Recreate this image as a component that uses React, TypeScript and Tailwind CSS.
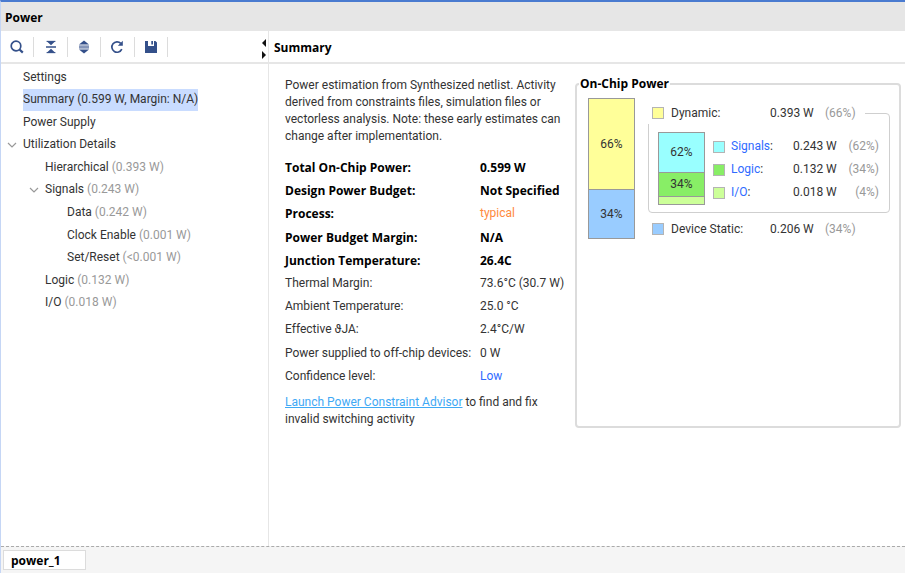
import type { ReactNode } from "react";

type TreeItem = {
  label: string;
  value?: string;
  indent: string;
  expanded?: boolean;
  selected?: boolean;
};

const tree: TreeItem[] = [
  { label: "Settings", indent: "pl-1" },
  { label: "Summary (0.599 W, Margin: N/A)", indent: "pl-1", selected: true },
  { label: "Power Supply", indent: "pl-1" },
  { label: "Utilization Details", indent: "pl-1", expanded: true },
  { label: "Hierarchical", value: "(0.393 W)", indent: "pl-[26px]" },
  { label: "Signals", value: "(0.243 W)", indent: "pl-[26px]", expanded: true },
  { label: "Data", value: "(0.242 W)", indent: "pl-12" },
  { label: "Clock Enable", value: "(0.001 W)", indent: "pl-12" },
  { label: "Set/Reset", value: "(<0.001 W)", indent: "pl-12" },
  { label: "Logic", value: "(0.132 W)", indent: "pl-[26px]" },
  { label: "I/O", value: "(0.018 W)", indent: "pl-[26px]" },
];

const summary = [
  { label: "Total On-Chip Power:", value: "0.599 W", bold: true },
  { label: "Design Power Budget:", value: "Not Specified", bold: true },
  { label: "Process:", value: "typical", bold: true, tone: "font-['Roboto','Open_Sans',sans-serif] font-normal text-[#ff8a3c]" },
  { label: "Power Budget Margin:", value: "N/A", bold: true },
  { label: "Junction Temperature:", value: "26.4C", bold: true },
  { label: "Thermal Margin:", value: "73.6°C (30.7 W)" },
  { label: "Ambient Temperature:", value: "25.0 °C" },
  { label: "Effective ϑJA:", value: "2.4°C/W" },
  { label: "Power supplied to off-chip devices:", value: "0 W" },
  { label: "Confidence level:", value: "Low", tone: "text-[#2f6bff]" },
];

const dynamicParts = [
  { label: "Signals", value: "0.243 W", pct: "(62%)", color: "bg-[#99ffff]" },
  { label: "Logic", value: "0.132 W", pct: "(34%)", color: "bg-[#88ee66]" },
  { label: "I/O", value: "0.018 W", pct: "(4%)", color: "bg-[#ccff99]" },
];

function ToolButton({ label, children }: { label: string; children: ReactNode }) {
  return (
    <button
      type="button"
      aria-label={label}
      className="flex h-5 flex-1 items-center justify-center border-r border-[#dcdcdc] text-[#34508a]"
    >
      <svg width="16" height="16" viewBox="0 0 16 16" fill="none" stroke="currentColor">
        {children}
      </svg>
    </button>
  );
}

function Swatch({ color }: { color: string }) {
  return <span className={`h-3 w-3 shrink-0 border border-[#b4b4b4] ${color}`} />;
}

function Toolbar() {
  return (
    <div className="flex h-[31px] items-center">
      <div className="flex w-[167px]">
        <ToolButton label="Search">
          <circle cx="7" cy="7" r="4.8" strokeWidth="1.7" />
          <path d="M10.5 10.5L13.8 13.6" strokeWidth="2.2" />
        </ToolButton>
        <ToolButton label="Collapse all">
          <path d="M3 8H13" strokeWidth="1.5" />
          <path d="M3.6 2.4H12.4" strokeWidth="1.1" />
          <path d="M3.6 13.6H12.4" strokeWidth="1.1" />
          <path d="M4 2.6H12L8 6.2ZM4 13.4H12L8 9.8Z" fill="currentColor" stroke="none" />
        </ToolButton>
        <ToolButton label="Expand all">
          <path d="M3 5.6L8 1.6L13 5.6ZM3 10.4L8 14.4L13 10.4Z" fill="currentColor" stroke="none" />
          <path d="M3 7.1H13M3 8.9H13" strokeWidth="1" />
        </ToolButton>
        <ToolButton label="Refresh">
          <path d="M11.8 4.4A5.2 5.2 0 1 0 12.8 10.2" strokeWidth="1.7" />
          <path d="M13.8 1.8V6.8H8.8Z" fill="currentColor" stroke="none" />
        </ToolButton>
        <ToolButton label="Save">
          <path d="M2 2H5V7H11V2H12.4L14 3.6V14H2ZM8.3 2H10V5.6H8.3Z" fill="currentColor" stroke="none" />
        </ToolButton>
      </div>
      <svg className="mt-1 mr-px ml-auto" width="6" height="20" viewBox="0 0 6 20" fill="#111">
        <path d="M5 0V8L1 4Z" />
        <path d="M1 12V20L5 16Z" />
      </svg>
    </div>
  );
}

function Tree() {
  return (
    <ul className="grid h-[250px] auto-rows-fr pt-[2px] pl-[6px]">
      {tree.map((item) => (
        <li key={item.label} className={`flex items-stretch ${item.indent}`}>
          <span className="flex w-3 shrink-0 items-center">
            {item.expanded && (
              <svg className="-ml-1" width="10" height="10" viewBox="0 0 10 10" fill="none" stroke="#999" strokeWidth="1.2">
                <path d="M1 3L5 7L9 3" />
              </svg>
            )}
          </span>
          <span
            className={`flex items-center whitespace-pre ${item.selected ? "bg-[#c9dcff]" : ""}`}
          >
            {item.label}
            {item.value && <span className="text-[#999]"> {item.value}</span>}
          </span>
        </li>
      ))}
    </ul>
  );
}

function OnChipPower() {
  return (
    <fieldset className="mt-3 mr-1 min-h-[352px] min-w-0 flex-1 rounded-sm border-2 border-[#dcdcdc] pl-[11px]">
      <legend className="-ml-[9px] px-[1px] font-['Open_Sans','Noto_Sans',sans-serif] font-bold leading-4 text-black">
        On-Chip Power
      </legend>
      <div className="flex gap-[13px] pt-[6px]">
        <div className="flex h-[141px] w-[47px] shrink-0 flex-col border border-[#999] text-center">
          <div className="flex h-[90px] items-center justify-center bg-[#ffff99]">66%</div>
          <div className="flex flex-1 items-center justify-center border-t border-[#999] bg-[#99ccff]">34%</div>
        </div>
        <div className="mt-1 w-[242px]">
          <fieldset className="h-[111px] min-w-0 rounded-sm border border-[#cfcfcf]">
            <legend className="-ml-px flex h-[22px] w-[217px] items-center bg-white pl-1">
              <Swatch color="bg-[#ffff99]" />
              <span className="w-[106px] pl-[7px]">Dynamic:</span>
              <span className="w-[55px]">0.393 W</span>
              <span className="text-[#999]">(66%)</span>
            </legend>
            <div className="flex gap-2 pt-2 pr-[10px] pl-[9px]">
              <div className="flex h-[73px] w-[47px] shrink-0 flex-col border border-[#999]">
                <div className="flex h-[39px] items-center justify-center bg-[#99ffff]">62%</div>
                <div className="flex h-[25px] items-center justify-center border-y border-[#999] bg-[#88ee66]">
                  34%
                </div>
                <div className="flex-1 bg-[#ccff99]" />
              </div>
              <div className="flex-1 pt-[3px]">
                {dynamicParts.map((part) => (
                  <div key={part.label} className="flex h-[23px] items-center">
                    <Swatch color={part.color} />
                    <span className="w-[68px] pl-[6px]">
                      <a href="#" className="text-[#2f6bff]">
                        {part.label}
                      </a>
                      :
                    </span>
                    <span>{part.value}</span>
                    <span className="ml-auto text-[#999]">{part.pct}</span>
                  </div>
                ))}
              </div>
            </div>
          </fieldset>
          <div className="mt-[5px] flex h-[22px] items-center pl-1">
            <Swatch color="bg-[#99ccff]" />
            <span className="w-[106px] pl-[7px]">Device Static:</span>
            <span className="w-[55px]">0.206 W</span>
            <span className="text-[#999]">(34%)</span>
          </div>
        </div>
      </div>
    </fieldset>
  );
}

export default function App() {
  return (
    <div className="flex h-screen flex-col border-t-2 border-l border-t-[#4a7bd0] border-l-[#c5d6f5] bg-white font-['Roboto','Open_Sans',sans-serif] text-[12px] leading-[17px] text-[#333]">
      <header className="flex h-[29px] shrink-0 items-center bg-[#e6e6e6] pt-px pl-1 font-['Open_Sans','Noto_Sans',sans-serif]">
        <h1 className="font-bold text-black">Power</h1>
      </header>
      <div className="flex min-h-0 flex-1">
        <aside className="flex w-[268px] shrink-0 flex-col border-r border-[#e6e6e6]">
          <Toolbar />
          <div className="h-[2px] shrink-0 bg-[#e6e6e6]" />
          <Tree />
        </aside>
        <main className="flex min-w-0 flex-1 flex-col">
          <div className="flex h-[31px] shrink-0 items-center pt-px pl-[5px]">
            <h2 className="font-['Open_Sans','Noto_Sans',sans-serif] font-bold text-black">Summary</h2>
          </div>
          <div className="h-[2px] shrink-0 bg-[#e6e6e6]" />
          <div className="flex items-start">
            <section className="w-[306px] shrink-0 pt-[13px] pl-4">
              <p className="pr-2">
                Power estimation from Synthesized netlist. Activity derived from constraints files, simulation files or
                vectorless analysis. Note: these early estimates can change after implementation.
              </p>
              <table className="mt-[11px] h-[232px] w-full">
                <tbody>
                  {summary.map((row) => (
                    <tr
                      key={row.label}
                      className={row.bold ? "font-['Open_Sans','Noto_Sans',sans-serif] font-bold text-black" : ""}
                    >
                      <th scope="row" className="w-[195px] text-left whitespace-nowrap [font-weight:inherit]">
                        {row.label}
                      </th>
                      <td className={`whitespace-nowrap ${row.tone ?? ""}`}>{row.value}</td>
                    </tr>
                  ))}
                </tbody>
              </table>
              <p className="mt-[6px] pr-7">
                <a href="#" className="text-[#3fa9f5] underline">
                  Launch Power Constraint Advisor
                </a>{" "}
                to find and fix invalid switching activity
              </p>
            </section>
            <OnChipPower />
          </div>
        </main>
      </div>
      <footer className="flex h-[27px] shrink-0 items-center border-t border-dashed border-[#aaa] bg-[#f5f5f5] pl-[2px]">
        <button
          type="button"
          className="h-5 w-[83px] border border-[#dcdcdc] bg-white pl-[7px] text-left font-['Open_Sans','Noto_Sans',sans-serif] font-bold text-black"
        >
          power_1
        </button>
      </footer>
    </div>
  );
}
